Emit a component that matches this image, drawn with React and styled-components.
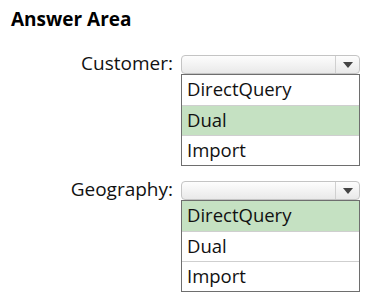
import React from 'react'
import styled, { createGlobalStyle } from 'styled-components'

const GlobalStyle = createGlobalStyle`
    body {
        margin: 0;
        background: #fff;
        font-family: 'Open Sans', 'Noto Sans', sans-serif;
        color: #111;
    }
`

const Page = styled.div`
    width: 369px;
    height: 305px;
    padding: 7px 0 0 11px;
    box-sizing: border-box;
`

const Title = styled.h1`
    margin: 0;
    font-size: 19px;
    font-weight: 700;
    line-height: 24px;
    color: #000;
`

const Fields = styled.div`
    display: flex;
    flex-direction: column;
    gap: 15px;
    margin-top: 24px;
`

const Field = styled.div`
    display: grid;
    grid-template-columns: 162px 179px;
    column-gap: 8px;
    align-items: start;
`

const Label = styled.div`
    text-align: right;
    font-size: 19px;
    line-height: 19px;
    margin-top: -1px;
`

const Control = styled.div`
    display: flex;
    flex-direction: column;
`

const Select = styled.div`
    height: 19px;
    box-sizing: border-box;
    border: 1px solid #c4c4c4;
    border-radius: 4px;
    background: linear-gradient(#fdfdfd, #e9e9e9);
    display: flex;
    justify-content: flex-end;
`

const ArrowCell = styled.div`
    width: 23px;
    border-left: 1px solid #d0d0d0;
    display: flex;
    align-items: center;
    justify-content: center;
`

const Arrow = styled.div`
    width: 0;
    height: 0;
    border-left: 5px solid transparent;
    border-right: 5px solid transparent;
    border-top: 6px solid #444;
`

const List = styled.div`
    border: 1px solid #6e6e6e;
    display: flex;
    flex-direction: column;
`

const Option = styled.div`
    height: 30px;
    box-sizing: border-box;
    padding-left: 5px;
    font-size: 18.5px;
    line-height: 28px;
    background: ${p => (p.selected ? '#c5e1c2' : '#fff')};
    border-top: ${p => (p.first ? 'none' : '1px solid #cfcfcf')};
`

const fields = [
    { label: 'Customer:', selected: 'Dual' },
    { label: 'Geography:', selected: 'DirectQuery' },
]

const options = ['DirectQuery', 'Dual', 'Import']

export default function App() {
    return (
        <Page>
            <GlobalStyle />
            <Title>Answer Area</Title>
            <Fields>
                {fields.map(f => (
                    <Field key={f.label}>
                        <Label>{f.label}</Label>
                        <Control>
                            <Select>
                                <ArrowCell>
                                    <Arrow />
                                </ArrowCell>
                            </Select>
                            <List>
                                {options.map((o, i) => (
                                    <Option key={o} first={i === 0} selected={o === f.selected}>
                                        {o}
                                    </Option>
                                ))}
                            </List>
                        </Control>
                    </Field>
                ))}
            </Fields>
        </Page>
    )
}
